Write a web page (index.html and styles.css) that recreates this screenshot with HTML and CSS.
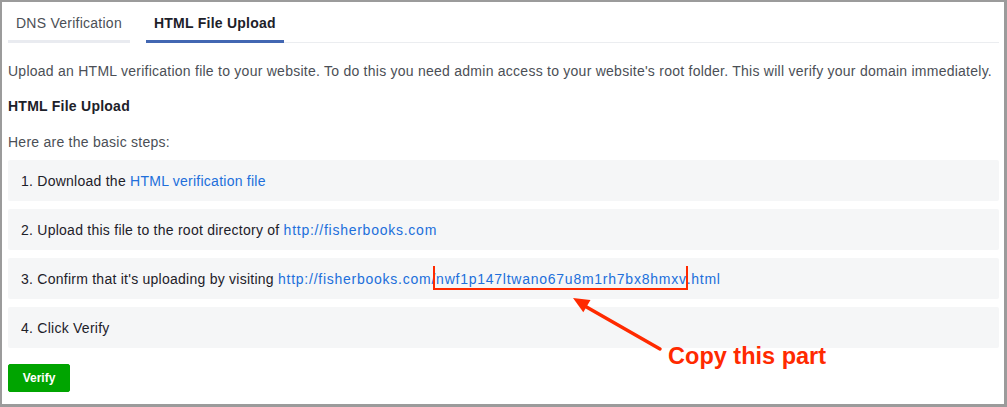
FILE: index.html
```html
<!DOCTYPE html>
<html lang="en">
<head>
  <meta charset="UTF-8" />
  <title>HTML File Upload</title>
  <link rel="stylesheet" href="styles.css">
</head>
<body>
  <div class="frame">
    <div class="tabs">
      <div class="tab">DNS Verification</div>
      <div class="tab active">HTML File Upload</div>
      <div class="tab-rest"></div>
    </div>

    <p class="intro">Upload an HTML verification file to your website. To do this you need admin access to your website's root folder. This will verify your domain immediately.</p>

    <h3>HTML File Upload</h3>

    <p class="intro">Here are the basic steps:</p>

    <div class="steps">
      <div class="step">1. Download the <a href="#">HTML verification file</a></div>
      <div class="step">2. Upload this file to the root directory of <a class="url" href="#">http://fisherbooks.com</a></div>
      <div class="step">3. Confirm that it's uploading by visiting <a class="url" href="#">http://fisherbooks.com/<span class="mark">nwf1p147ltwano67u8m1rh7bx8hmxv<svg class="arrow" width="100" height="70" viewBox="0 0 100 70"><line x1="91" y1="59" x2="14" y2="15" stroke="#ff2a00" stroke-width="3.5" stroke-linecap="round"/><polygon points="4,8 21.5,10 14.3,22.3" fill="#ff2a00"/></svg><span class="note">Copy this part</span></span>.html</a></div>
      <div class="step">4. Click Verify</div>
    </div>

    <button class="verify">Verify</button>
  </div>
</body>
</html>
```

FILE: styles.css
```css
* {
  box-sizing: border-box;
}

body {
  margin: 0;
  font-family: "Liberation Sans", Arial, sans-serif;
  font-size: 14px;
  letter-spacing: 0.25px;
  color: #1d2129;
  background: #fff;
}

.frame {
  height: 407px;
  border: 2px solid #9b9b9b;
  border-right-width: 3px;
  border-bottom-width: 3px;
  padding: 0 5px 0 6px;
  overflow: hidden;
}

.tabs {
  display: flex;
  align-items: flex-end;
  padding-top: 13px;
}

.tab {
  padding: 0 8px 9px;
  line-height: 16px;
  color: #4b4f56;
  border-bottom: 3px solid #e9ebf0;
  margin-right: 16px;
}

.tab.active {
  font-weight: bold;
  color: #1d2129;
  border-bottom-color: #4267b2;
  margin-right: 0;
}

.tab-rest {
  flex: 1;
  border-bottom: 1px solid #ebedf0;
}

.intro {
  margin: 19px 0 0;
  line-height: 18px;
  color: #4b4f56;
}

h3 {
  margin: 17px 0 0;
  font-size: 14px;
  line-height: 18px;
  color: #1d2129;
}

h3 + .intro {
  margin-top: 18px;
}

.steps {
  margin-top: 9px;
  display: flex;
  flex-direction: column;
  gap: 8px;
}

.step {
  background: #f5f6f7;
  border-radius: 2px;
  padding: 12px 13px 11px;
  line-height: 18px;
}

a {
  color: #216fdb;
  text-decoration: none;
}

a.url {
  letter-spacing: 0.75px;
}

.mark {
  position: relative;
}

.mark::after {
  content: "";
  position: absolute;
  left: -3px;
  right: -1px;
  top: -5px;
  bottom: -3px;
  border: 2.5px solid #ff2a00;
  border-top: none;
}

.arrow {
  position: absolute;
  left: 133px;
  top: 19px;
}

.note {
  position: absolute;
  left: 232px;
  top: 76px;
  white-space: nowrap;
  font-size: 23.5px;
  font-weight: bold;
  letter-spacing: 0;
  color: #ff2a00;
}

.verify {
  margin-top: 16px;
  width: 62px;
  height: 28px;
  background: #00a400;
  border: 1px solid #00a400;
  border-radius: 2px;
  color: #fff;
  font-family: inherit;
  font-size: 12px;
  font-weight: bold;
  letter-spacing: 0;
  padding: 0;
}
```
